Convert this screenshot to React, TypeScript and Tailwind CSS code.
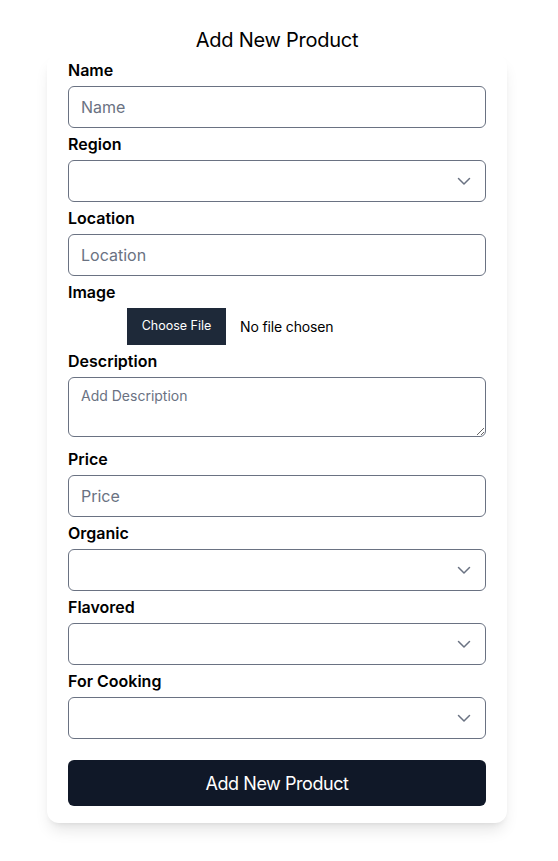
import React from "react";

const Chevron = () => (
  <svg
    className="pointer-events-none absolute right-[12px] top-1/2 -translate-y-1/2 text-gray-500"
    width="20"
    height="20"
    viewBox="0 0 20 20"
    fill="none"
    stroke="currentColor"
    strokeWidth="1.5"
    strokeLinecap="round"
    strokeLinejoin="round"
  >
    <path d="M4.5 7.5l5.5 5.5 5.5-5.5" />
  </svg>
);

const Label: React.FC<{ text: string }> = ({ text }) => (
  <label className="block font-semibold text-[16px] leading-6 text-black">{text}</label>
);

const TextInput: React.FC<{ placeholder: string }> = ({ placeholder }) => (
  <input
    className="block w-full h-[42px] rounded-md border border-gray-500 px-3 text-[16px] text-black placeholder:text-gray-500 outline-none"
    placeholder={placeholder}
  />
);

const Select = () => (
  <div className="relative h-[42px]">
    <select className="block w-full h-[42px] appearance-none rounded-md border border-gray-500 bg-white px-3 text-[16px] outline-none">
      <option value=""></option>
    </select>
    <Chevron />
  </div>
);

export default function App() {
  return (
    <div className="min-h-screen bg-white pr-[4px] font-['Inter',sans-serif]">
      <h1 className="pt-[26px] text-center text-xl leading-7 tracking-[-0.013em] text-black">
        Add New Product
      </h1>
      <div className="mx-auto w-[460px] rounded-xl bg-white px-[21px] pt-1 pb-[17px] shadow-lg">
        <form className="flex flex-col gap-1">
          <Label text="Name" />
          <TextInput placeholder="Name" />
          <Label text="Region" />
          <Select />
          <Label text="Location" />
          <TextInput placeholder="Location" />
          <Label text="Image" />
          <div className="flex items-center">
            <button
              type="button"
              className="ml-[59px] h-[37px] w-[99px] bg-gray-800 text-[12.5px] text-white"
            >
              Choose File
            </button>
            <span className="ml-[14px] text-[14px] tracking-[-0.01em] text-black">No file chosen</span>
          </div>
          <Label text="Description" />
          <textarea
            className="mb-[6px] block h-[60px] w-full rounded-md border border-gray-500 px-3 py-2 text-[14px] leading-5 placeholder:text-gray-500 outline-none"
            placeholder="Add Description"
          />
          <Label text="Price" />
          <TextInput placeholder="Price" />
          <Label text="Organic" />
          <Select />
          <Label text="Flavored" />
          <Select />
          <Label text="For Cooking" />
          <Select />
          <button
            type="button"
            className="mt-[17px] h-[46px] w-full rounded-md bg-gray-900 text-[18px] tracking-tight text-white"
          >
            Add New Product
          </button>
        </form>
      </div>
    </div>
  );
}
